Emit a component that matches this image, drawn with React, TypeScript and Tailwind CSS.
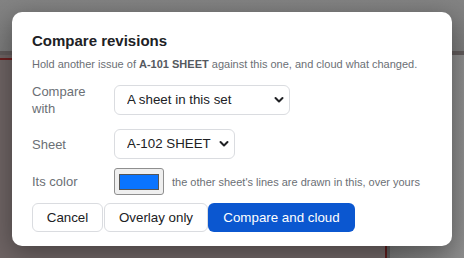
import React from "react";

function Chevron() {
  return (
    <svg className="absolute right-[6px] top-[11px] pointer-events-none" width="10" height="8" viewBox="0 0 10 8">
      <path d="M1.5 2 L5 5.5 L8.5 2" fill="none" stroke="#202124" strokeWidth="2" strokeLinecap="round" strokeLinejoin="round" />
    </svg>
  );
}

export default function App() {
  const font = { fontFamily: '"Liberation Sans", Arial, sans-serif' };
  return (
    <div className="relative w-[464px] h-[258px] overflow-hidden" style={font}>
      {/* background page under overlay */}
      <div className="flex flex-col w-full h-full">
        <div className="h-[51px] bg-gradient-to-b from-[#838383] to-[#7a7a7a]" />
        <div className="h-[4px] bg-[#5f5959]" />
        <div className="flex flex-1">
          <div className="w-[385px] flex flex-col bg-[#6d6363]">
            <div className="h-[3px]" />
            <div className="h-[2px] bg-[#6a1f1f]" />
          </div>
          <div className="w-[2px] bg-[#5a1c1c]" />
          <div className="w-[3px] bg-[#5a5a5a]" />
          <div className="flex-1 bg-gradient-to-r from-[#747474] to-[#8c8c8c]" />
        </div>
      </div>

      {/* modal */}
      <div className="absolute inset-0 pl-[12px] pt-[12px]">
        <div className="w-[440px] h-[234px] bg-white rounded-[10px] shadow-[0_6px_24px_rgba(0,0,0,0.35)] pl-[20px] pt-[19px]">
          <div className="text-[15px] leading-[20px] font-bold text-[#202124]">Compare revisions</div>
          <div className="mt-[5px] text-[11px] leading-[16px] text-[#6b6f75]">
            Hold another issue of <b className="font-bold text-[#55595f]">A-101 SHEET</b> against this one, and cloud what changed.
          </div>

          <div className="mt-[11px] flex items-center">
            <div className="w-[82px] text-[13px] leading-[17px] text-[#6b6f75]">
              Compare
              <br />
              with
            </div>
            <div className="relative">
              <select
                defaultValue="set"
                className="appearance-none block w-[176px] h-[30px] rounded-[6px] border border-[#dadce0] bg-white pl-[12px] pr-[20px] text-[13.333px] text-[#202124]"
                style={font}
              >
                <option value="set">A sheet in this set</option>
              </select>
              <Chevron />
            </div>
          </div>

          <div className="mt-[12px] flex items-center">
            <div className="w-[82px] text-[13px] leading-[17px] text-[#6b6f75]">Sheet</div>
            <div className="relative">
              <select
                defaultValue="a102"
                className="appearance-none block w-[121px] h-[30px] rounded-[6px] border border-[#dadce0] bg-white pl-[12px] pr-[18px] text-[13.333px] text-[#202124]"
                style={font}
              >
                <option value="a102">A-102 SHEET</option>
              </select>
              <Chevron />
            </div>
          </div>

          <div className="mt-[9px] flex items-center">
            <div className="w-[82px] text-[13px] leading-[17px] text-[#6b6f75]">Its color</div>
            <div className="w-[50px] h-[27px] rounded-[3px] border border-[#8f8f8f] bg-[#efefef] flex items-center justify-center">
              <div className="w-[40px] h-[16px] bg-[#0a74ff] border border-[#555]" />
            </div>
            <div className="ml-[8px] text-[11px] leading-[16px] text-[#6b6f75]">the other sheet's lines are drawn in this, over yours</div>
          </div>

          <div className="mt-[8px] flex items-center">
            <button className="w-[71px] h-[29px] rounded-[6px] border border-[#dadce0] bg-white text-[13.333px] text-[#202124]">Cancel</button>
            <button className="ml-[1px] w-[104px] h-[29px] rounded-[6px] border border-[#dadce0] bg-white text-[13.333px] text-[#202124]">Overlay only</button>
            <button className="w-[147px] h-[29px] rounded-[6px] bg-[#0b57d0] text-[13.333px] text-white">Compare and cloud</button>
          </div>
        </div>
      </div>
    </div>
  );
}
